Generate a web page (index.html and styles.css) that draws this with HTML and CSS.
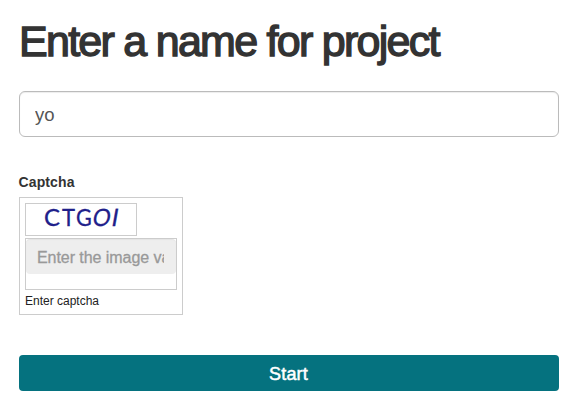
FILE: index.html
```html
<!DOCTYPE html>
<html lang="en">
<head>
<meta charset="utf-8">
<title>New project</title>
<link rel="stylesheet" href="styles.css">
</head>
<body>
<form class="form">
  <h1 class="title"><svg width="440" height="46"><text x="-1" y="37" textLength="421.5">Enter a name for project</text></svg></h1>
  <input class="name" type="text" value="yo" aria-label="Name">
  <div class="label"><svg width="80" height="18"><text x="-0.5" y="14" textLength="56">Captcha</text></svg></div>
  <div class="captcha">
    <div class="image">
      <svg width="110" height="31">
        <text x="18" y="22">C</text>
        <text transform="translate(36 22) scale(.92 1)">T</text>
        <text transform="translate(50 22) scale(.9 1)">G</text>
        <text transform="translate(65.5 22) skewX(-10) scale(.93 1)">O</text>
        <text transform="translate(84.5 22) skewX(-10)">I</text>
      </svg>
    </div>
    <div class="answer"><input type="text" placeholder="Enter the image value" aria-label="Captcha"></div>
    <div class="help">Enter captcha</div>
  </div>
  <button class="start" type="button">Start</button>
</form>
</body>
</html>
```
FILE: styles.css
```css
* { box-sizing: border-box; }
body {
  margin: 0;
  background: #fff;
  color: #333;
  font-family: "Liberation Sans", Arial, sans-serif;
}
svg { display: block; overflow: visible; fill: currentColor; }
.form { width: 540px; margin-left: 19px; padding-top: 19px; }
.title {
  height: 72px;
  margin: 0;
  padding-left: 1px;
  font-size: 43px;
  font-weight: 400;
}
.title text { stroke: #333; stroke-width: 1.4px; }
.name {
  display: block;
  width: 540px;
  height: 46px;
  padding: 1px 15px 0;
  border: 1px solid #bbb;
  border-radius: 6px;
  box-shadow: inset 0 1px 1px rgba(0, 0, 0, .075);
  color: #555;
  font: 18.5px "Liberation Sans", Arial, sans-serif;
}
.label { height: 60px; padding-top: 36px; font-size: 14px; font-weight: 700; }
.captcha {
  width: 164px;
  height: 118px;
  padding: 5px;
  border: 1px solid #ccc;
}
.image {
  width: 112px;
  height: 33px;
  margin-bottom: 2px;
  border: 1px solid #ccc;
  color: #20208a;
  font: 24px Lato, sans-serif;
}
.image text { stroke: #20208a; stroke-width: .3px; }
.answer { width: 152px; height: 52px; border: 1px solid #ccc; }
.answer input {
  display: block;
  width: 150px;
  height: 35px;
  padding: 2px 12px 0 11px;
  border: 0;
  border-radius: 4px;
  background: #eee;
  box-shadow: inset 0 1px 1px rgba(0, 0, 0, .04);
  font: 16px "Liberation Sans", Arial, sans-serif;
  letter-spacing: -.06px;
}
.answer input::placeholder { color: #999; -webkit-text-stroke: .3px #999; }
.help { padding-top: 4px; font-size: 12px; line-height: 14px; color: #222; }
.start {
  display: block;
  width: 540px;
  height: 36px;
  margin-top: 40px;
  padding: 2px 1px 0 0;
  border: 0;
  border-radius: 4px;
  background: #05727f;
  color: #fff;
  font: 18px "Liberation Sans", Arial, sans-serif;
  letter-spacing: .15px;
  -webkit-text-stroke: .5px #fff;
}
```
